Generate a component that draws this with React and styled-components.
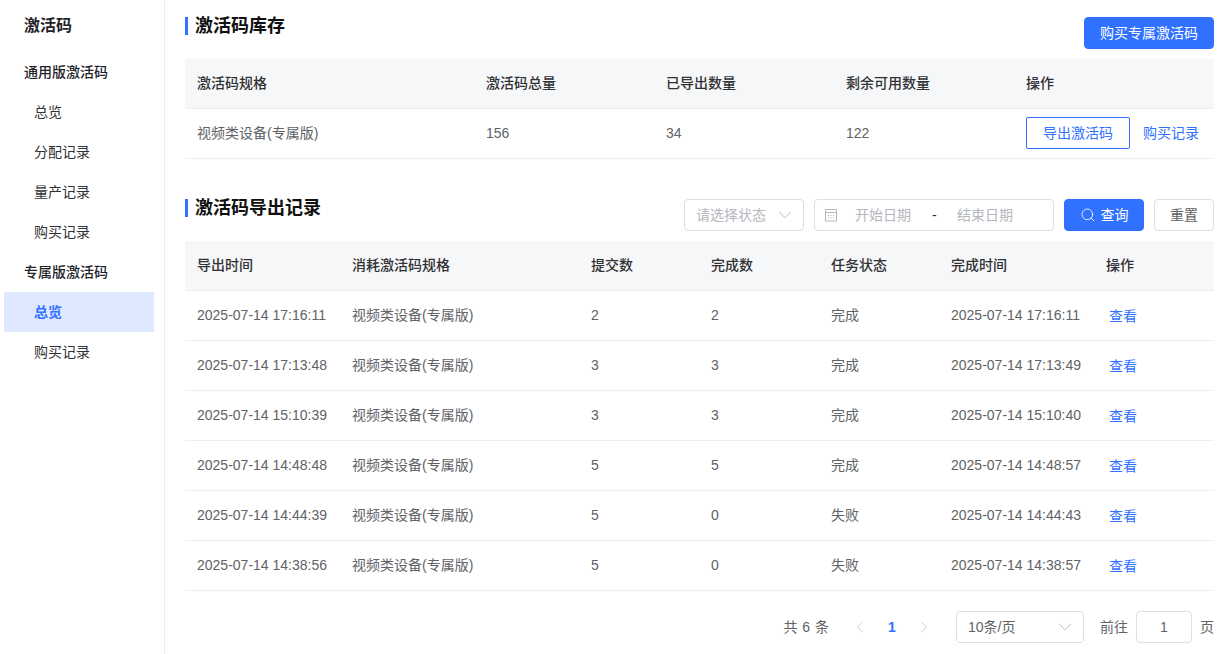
import React from 'react';
import styled, { createGlobalStyle } from 'styled-components';
import { ChevronDown, ChevronLeft, ChevronRight, Search } from 'lucide-react';

const blue = '#3071ff';
const line = '#ebeef5';
const inputLine = '#dcdfe6';

const GlobalStyle = createGlobalStyle`
   html, body {
      margin: 0;
      height: 100%;
      background: #fff;
      overflow: hidden;
   }
   body {
      font-family: 'Liberation Sans', 'Noto Sans CJK SC', sans-serif;
      font-size: 14px;
      line-height: 20px;
      color: #606266;
   }
`;

const Page = styled.div`
   display: flex;
   height: 654px;
`;

const Sidebar = styled.aside`
   flex: 0 0 165px;
   box-sizing: border-box;
   border-right: 1px solid ${line};
   padding: 0 10px 0 4px;
`;

const SideTitle = styled.div`
   height: 52px;
   line-height: 52px;
   padding-left: 20px;
   font-size: 16px;
   font-weight: 700;
   color: #1f2329;
`;

const SideGroup = styled.div`
   height: 40px;
   line-height: 40px;
   padding-left: 20px;
   font-weight: 500;
   color: #1f2329;
`;

const SideItem = styled.div`
   height: 40px;
   line-height: 40px;
   padding-left: 30px;
   color: ${props => (props.active ? blue : '#303133')};
   background: ${props => (props.active ? '#dee8ff' : 'transparent')};
   font-weight: ${props => (props.active ? 700 : 400)};
`;

const Main = styled.main`
   flex: 1;
   min-width: 0;
   padding: 17px 10px 0 20px;
`;

const SectionHead = styled.div`
   display: flex;
   justify-content: space-between;
   align-items: flex-start;
   height: 32px;
   margin-bottom: 10px;
`;

const SectionTitle = styled.h2`
   margin: 0;
   height: 18px;
   line-height: 18px;
   padding-left: 7px;
   border-left: 3px solid ${blue};
   font-size: 18px;
   font-weight: 700;
   color: #111;
`;

const Button = styled.button`
   display: inline-flex;
   align-items: center;
   justify-content: center;
   gap: 5px;
   box-sizing: border-box;
   width: ${props => props.width}px;
   height: 32px;
   padding: 0;
   border: 1px solid ${props => (props.primary || props.outline ? blue : inputLine)};
   border-radius: ${props => (props.outline ? 2 : 4)}px;
   background: ${props => (props.primary ? blue : '#fff')};
   color: ${props => (props.primary ? '#fff' : props.outline ? blue : '#606266')};
   font: inherit;
`;

const Row = styled.div`
   display: grid;
   grid-template-columns: ${props => props.cols};
   align-items: center;
   height: 50px;
   box-sizing: border-box;
   padding-bottom: 2px;
   border-bottom: 1px solid ${line};
   background: ${props => (props.head ? '#f6f7f9' : '#fff')};
   color: ${props => (props.head ? '#303133' : '#606266')};
   font-weight: ${props => (props.head ? 500 : 400)};
`;

const Cell = styled.div`
   padding-left: 12px;
   white-space: nowrap;
`;

const ActionCell = styled(Cell)`
   display: flex;
   align-items: center;
   gap: 13px;
`;

const ViewCell = styled(Cell)`
   padding-left: 15px;
   padding-top: 2px;
`;

const LinkText = styled.span`
   color: ${blue};
`;

const StockSection = styled.section`
   margin-bottom: 40px;
`;

const Filters = styled.div`
   display: flex;
   gap: 10px;
`;

const Field = styled.div`
   display: flex;
   align-items: center;
   box-sizing: border-box;
   width: ${props => props.width}px;
   height: 32px;
   padding: 0 ${props => props.pad ?? 11}px;
   border: 1px solid ${inputLine};
   border-radius: 4px;
   color: ${props => (props.filled ? '#606266' : '#b4b7bd')};
   background: #fff;
`;

const FieldText = styled.span`
   flex: 1;
`;

const FieldCaret = styled(ChevronDown)`
   margin-right: -4px;
   color: #b4b7bd;
`;

const DateSlot = styled.span`
   width: 90px;
   text-align: center;
   color: #b4b7bd;
`;

const DateDash = styled.span`
   width: 4px;
   margin: 0 4px;
   color: #303133;
`;

const CalendarBox = styled.span`
   display: flex;
   width: 13px;
   margin-left: 10px;
`;

const Pager = styled.div`
   display: flex;
   align-items: center;
   justify-content: flex-end;
   height: 32px;
   margin-top: 20px;
`;

const PageArrow = styled.span`
   display: flex;
   justify-content: center;
   width: 32px;
   color: #c0c4cc;
`;

const PageNum = styled.span`
   width: 32px;
   text-align: center;
   color: ${blue};
   font-weight: 700;
`;

const Total = styled.span`
   margin-right: 15px;
   word-spacing: 1px;
`;

const PageSize = styled(Field)`
   margin-left: 16px;
`;

const JumpLabel = styled.span`
   margin: 0 8px 0 16px;
`;

const JumpInput = styled(Field)`
   justify-content: center;
   margin-right: 8px;
`;

const CalendarIcon = () => (
   <svg width="13" height="13" viewBox="0 0 13 13" fill="none" stroke="#b4b7bd" strokeWidth="1">
      <rect x="0.5" y="0.5" width="11" height="11.5" />
      <path d="M0.5 3.5h11" />
      <path d="M3 6.5h1M5.5 6.5h1M8 6.5h1M3 9h1M5.5 9h1M8 9h1" />
   </svg>
);

const stockCols = '289px 180px 180px 180px 200px';
const recordCols = '155px 239px 120px 120px 120px 155px 120px';

const records = [
   ['2025-07-14 17:16:11', '2', '2', '完成', '2025-07-14 17:16:11'],
   ['2025-07-14 17:13:48', '3', '3', '完成', '2025-07-14 17:13:49'],
   ['2025-07-14 15:10:39', '3', '3', '完成', '2025-07-14 15:10:40'],
   ['2025-07-14 14:48:48', '5', '5', '完成', '2025-07-14 14:48:57'],
   ['2025-07-14 14:44:39', '5', '0', '失败', '2025-07-14 14:44:43'],
   ['2025-07-14 14:38:56', '5', '0', '失败', '2025-07-14 14:38:57'],
];

export default function App() {
   return (
      <Page>
         <GlobalStyle />
         <Sidebar>
            <SideTitle>激活码</SideTitle>
            <SideGroup>通用版激活码</SideGroup>
            <SideItem>总览</SideItem>
            <SideItem>分配记录</SideItem>
            <SideItem>量产记录</SideItem>
            <SideItem>购买记录</SideItem>
            <SideGroup>专属版激活码</SideGroup>
            <SideItem active>总览</SideItem>
            <SideItem>购买记录</SideItem>
         </Sidebar>
         <Main>
            <StockSection>
               <SectionHead>
                  <SectionTitle>激活码库存</SectionTitle>
                  <Button primary width={130}>购买专属激活码</Button>
               </SectionHead>
               <Row head cols={stockCols}>
                  <Cell>激活码规格</Cell>
                  <Cell>激活码总量</Cell>
                  <Cell>已导出数量</Cell>
                  <Cell>剩余可用数量</Cell>
                  <Cell>操作</Cell>
               </Row>
               <Row cols={stockCols}>
                  <Cell>视频类设备(专属版)</Cell>
                  <Cell>156</Cell>
                  <Cell>34</Cell>
                  <Cell>122</Cell>
                  <ActionCell>
                     <Button outline width={104}>导出激活码</Button>
                     <LinkText>购买记录</LinkText>
                  </ActionCell>
               </Row>
            </StockSection>
            <section>
               <SectionHead>
                  <SectionTitle>激活码导出记录</SectionTitle>
                  <Filters>
                     <Field width={120}>
                        <FieldText>请选择状态</FieldText>
                        <FieldCaret size={22} strokeWidth={1} />
                     </Field>
                     <Field width={240} pad={0}>
                        <CalendarBox>
                           <CalendarIcon />
                        </CalendarBox>
                        <DateSlot>开始日期</DateSlot>
                        <DateDash>-</DateDash>
                        <DateSlot>结束日期</DateSlot>
                     </Field>
                     <Button primary width={80}>
                        <Search size={16} strokeWidth={1.3} />
                        查询
                     </Button>
                     <Button width={60}>重置</Button>
                  </Filters>
               </SectionHead>
               <Row head cols={recordCols}>
                  <Cell>导出时间</Cell>
                  <Cell>消耗激活码规格</Cell>
                  <Cell>提交数</Cell>
                  <Cell>完成数</Cell>
                  <Cell>任务状态</Cell>
                  <Cell>完成时间</Cell>
                  <Cell>操作</Cell>
               </Row>
               {records.map(([exported, submitted, done, status, finished]) => (
                  <Row key={exported} cols={recordCols}>
                     <Cell>{exported}</Cell>
                     <Cell>视频类设备(专属版)</Cell>
                     <Cell>{submitted}</Cell>
                     <Cell>{done}</Cell>
                     <Cell>{status}</Cell>
                     <Cell>{finished}</Cell>
                     <ViewCell>
                        <LinkText>查看</LinkText>
                     </ViewCell>
                  </Row>
               ))}
               <Pager>
                  <Total>共 6 条</Total>
                  <PageArrow>
                     <ChevronLeft size={20} strokeWidth={1} />
                  </PageArrow>
                  <PageNum>1</PageNum>
                  <PageArrow>
                     <ChevronRight size={20} strokeWidth={1} />
                  </PageArrow>
                  <PageSize filled width={128}>
                     <FieldText>10条/页</FieldText>
                     <FieldCaret size={22} strokeWidth={1} />
                  </PageSize>
                  <JumpLabel>前往</JumpLabel>
                  <JumpInput filled width={56}>1</JumpInput>
                  <span>页</span>
               </Pager>
            </section>
         </Main>
      </Page>
   );
}
